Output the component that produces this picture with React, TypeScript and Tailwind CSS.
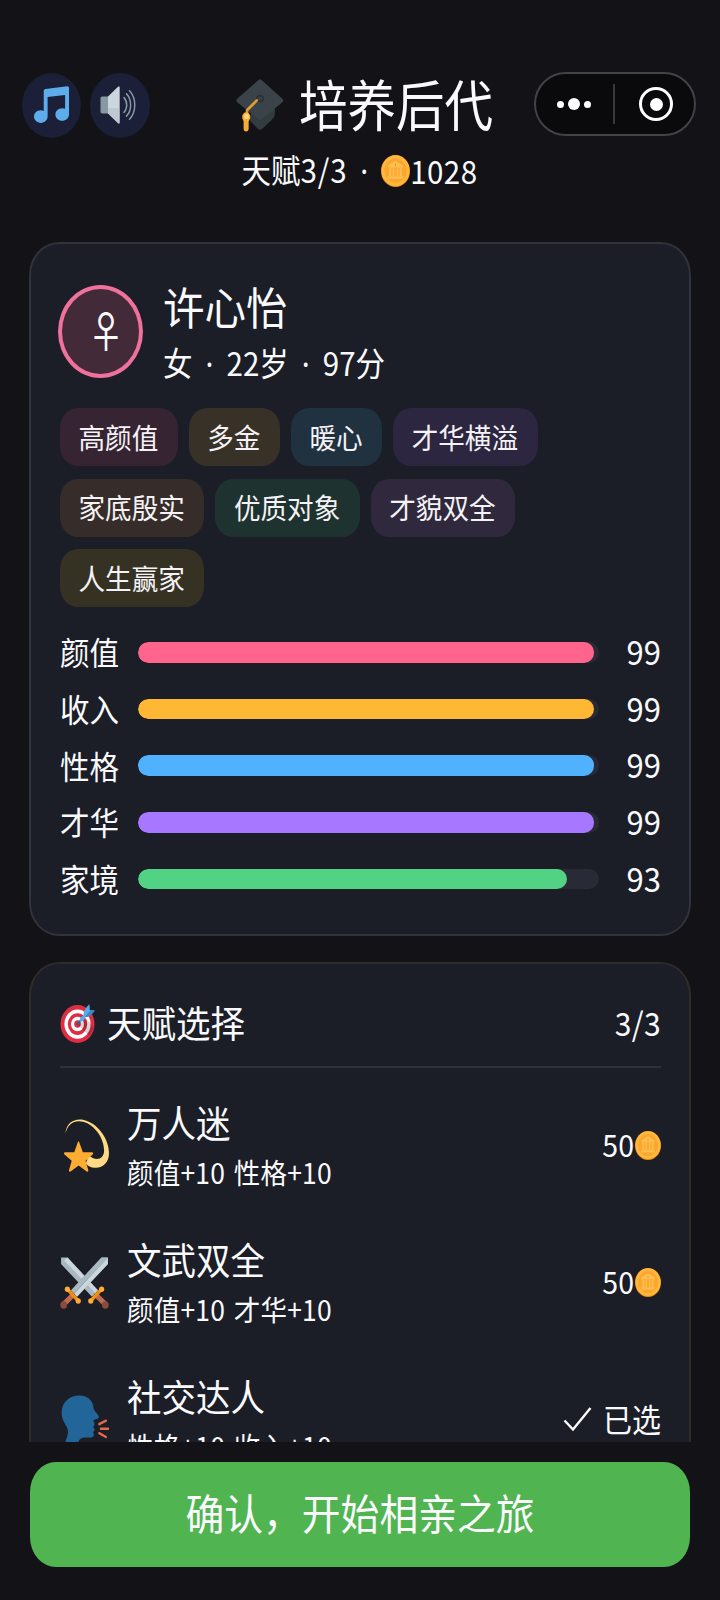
import React from "react";

interface Tag {
  label: string;
  className: string;
}

interface Stat {
  label: string;
  value: number;
  color: string;
}

interface Talent {
  name: string;
  effect: string;
  icon: React.ReactNode;
  price: number;
  selected?: boolean;
}

interface IconProps {
  className?: string;
}

const NoteIcon: React.FC<IconProps> = ({ className = "" }) => (
  <svg viewBox="0 0 36 36" preserveAspectRatio="none" className={className}>
    <path
      fill="#5DADEC"
      d="M34.209.206L11.791 2.793C10.806 2.907 10 3.811 10 4.803v18.782C9.09 23.214 8.075 23 7 23c-3.865 0-7 2.685-7 6 0 3.314 3.135 6 7 6s7-2.686 7-6V10.539l18-2.077v13.124c-.91-.372-1.925-.586-3-.586-3.865 0-7 2.685-7 6 0 3.314 3.135 6 7 6s7-2.686 7-6V1.803c0-.992-.806-1.71-1.791-1.597z"
    />
  </svg>
);

const SpeakerIcon: React.FC<IconProps> = ({ className = "" }) => (
  <svg viewBox="0 0 36 36" preserveAspectRatio="none" className={className}>
    <path fill="#8899A6" d="M9 10H2c-1 0-1.500.7-1.500 1.500v13c0 .8.500 1.500 1.500 1.500h7z" />
    <path fill="#CCD6DD" d="M8 10L18 .8c.9-.7 1.700-.3 1.700.8v32.800c0 1.100-.8 1.500-1.700.8L8 26z" />
    <path fill="#AAB8C2" d="M8 21h11.700v13.400c0 1.100-.8 1.500-1.700.8L8 26z" opacity=".45" />
    <g fill="none" stroke="#8899A6" strokeLinecap="round" strokeWidth="1.500">
      <path d="M24 11c3.600 3.600 3.600 10.400 0 14" />
      <path d="M26.500 7.500c5.500 5.300 5.500 15.700 0 21" />
      <path d="M29.500 4.500c7 6.900 7 20.100 0 27" />
    </g>
  </svg>
);

const CapIcon: React.FC<IconProps> = ({ className = "" }) => (
  <svg viewBox="0 0 36 36" preserveAspectRatio="none" className={className}>
    <path
      fill="#323B40"
      d="M28.600 18.500c1.300 3 .9 7.600-2 9.700l-6.800 5.600c-1 .9-2.500.9-3.500 0l-5.800-5.300 1-8z"
    />
    <path
      fill="#394349"
      d="M16.900 1.400c.7-.7 1.600-.7 2.300 0l15.600 12.400c.8.700.8 1.600 0 2.300L19.200 27.700c-.7.600-1.600.6-2.300 0L.9 16.100c-.8-.7-.8-1.600 0-2.300z"
    />
    <ellipse cx="18" cy="13.800" rx="2.400" ry="1.900" fill="none" stroke="#292F33" strokeWidth="1" />
    <path d="M15.500 15l-7.200 6.400v4" fill="none" stroke="#E39A32" strokeWidth="2" strokeLinecap="round" />
    <path d="M7.600 28.500v5.200" fill="none" stroke="#F4AB37" strokeWidth="3.800" strokeLinecap="round" />
    <circle cx="7.700" cy="26" r="3.100" fill="#FFAC33" />
    <circle cx="7.900" cy="25.600" r="1.800" fill="#FFD983" />
  </svg>
);

const CoinIcon: React.FC<IconProps> = ({ className = "" }) => (
  <svg viewBox="0 0 36 36" preserveAspectRatio="none" className={className}>
    <circle cx="18" cy="18" r="18" fill="#F4900C" />
    <circle cx="18" cy="17.600" r="17.300" fill="#FFB83F" />
    <circle cx="18" cy="17.600" r="13.800" fill="#FBA62D" />
    <g fill="#FFBF50">
      <path d="M18 6.500l9.200 5v2.700H8.800v-2.700z" />
      <path d="M10.200 15h2.600v8.500h-2.600zM14.600 15h2v8.500h-2zM19.400 15h2v8.500h-2zM23.200 15h2.600v8.500h-2.600z" />
      <path d="M8.800 24h18.400v2.800H8.800z" />
    </g>
    <path d="M17.300 10.200h1.400v2.400h-1.400z" fill="#F4900C" />
  </svg>
);

const TargetIcon: React.FC<IconProps> = ({ className = "" }) => (
  <svg viewBox="0 0 36 36" preserveAspectRatio="none" className={className}>
    <circle cx="18" cy="18.500" r="17.500" fill="#DD2E44" />
    <circle cx="18" cy="18.500" r="13.500" fill="#FFF" />
    <circle cx="18" cy="18.500" r="10" fill="#DD2E44" />
    <circle cx="18" cy="18.500" r="6.700" fill="#FFF" />
    <circle cx="18" cy="18.500" r="3.400" fill="#DD2E44" />
    <path fill="#000" opacity=".16" d="M18.200 19l12 10.500 4.500-7.500-7-8z" />
    <path d="M18 18.500L28.500 8" stroke="#226699" strokeWidth="2" strokeLinecap="round" />
    <path fill="#55ACEE" d="M24.500 11.500c-1.300-3 1-7 5.500-11.200.7 2 .6 3.600.4 5.300 1.800-.3 3.400-.2 5.300.7-3.700 4.500-8 6.800-11.200 5.200z" />
    <path fill="#3A87C2" d="M25.500 12l6.300-6.800 3.900 1c-3.200 4.200-7 6.400-10.200 5.800z" />
    <path fill="#55ACEE" d="M20 15.500c.2-2.600 2-4.300 4.700-5l1.400 1.500c-.8 2.700-2.800 4.300-5.400 4.500z" />
  </svg>
);

const DizzyIcon: React.FC<IconProps> = ({ className = "" }) => (
  <svg viewBox="0 0 36 36" preserveAspectRatio="none" className={className}>
    <path
      fill="#FFD983"
      d="M4 11.300C4.500 4 10.500.7 17.500 2 27.500 4 36 14.500 36 24.500c0 6.500-4.500 10.300-10.300 10-3-.1-5.300-1.300-6.700-3l2-5.500c5.500 4.500 11.500 2.500 11.400-3.500-.2-8.300-6.900-17.200-15.400-19.300C10.500 1.700 5.500 4.800 4 11.300z"
    />
    <path
      fill="#FFAC33"
      d="M14 16.800l2.800 7.200h6.700c.9 0 1.200 1 .5 1.500l-5.200 4.200 2 6.500c.2.800-.6 1.300-1.200.8L13.700 33l-5.900 4c-.6.500-1.400 0-1.200-.8l2-6.500-5.300-4.200c-.7-.5-.4-1.500.5-1.500h6.700l2.700-7.200c.2-.5.700-.5.800 0z"
    />
  </svg>
);

const SwordsIcon: React.FC<IconProps> = ({ className = "" }) => (
  <svg viewBox="0 0 36 36" preserveAspectRatio="none" className={className}>
    <g>
      <path fill="#AAB8C2" d="M.8 1h4.700l22.300 22.300-4.300 4.300L.8 5.500z" />
      <path fill="#CCD6DD" d="M5.500 1l22.300 22.300-1.900 1.900L3 3z" />
      <path d="M27 27l6.300 5.800" stroke="#BF6952" strokeWidth="3.600" />
      <circle cx="33.300" cy="33.300" r="2.500" fill="#8A4B38" />
      <path d="M22.500 30.500l8.300-8.300" stroke="#F4900C" strokeWidth="2.400" />
      <circle cx="22.600" cy="30.600" r="1.900" fill="#FFAC33" />
      <circle cx="30.600" cy="22.600" r="1.900" fill="#FFAC33" />
    </g>
    <g transform="matrix(-1 0 0 1 36 0)">
      <path fill="#8899A6" d="M.8 1h4.700l22.300 22.300-4.300 4.300L.8 5.500z" />
      <path fill="#CCD6DD" d="M.8 1v4.500l22.700 22.100 2-2L2.800 3z" />
      <path fill="#AAB8C2" d="M2.800 3L.8 1h4.700l22.300 22.300-2 2z" />
      <path d="M27 27l6.300 5.800" stroke="#BF6952" strokeWidth="3.600" />
      <circle cx="33.300" cy="33.300" r="2.500" fill="#8A4B38" />
      <path d="M22.500 30.500l8.300-8.300" stroke="#F4900C" strokeWidth="2.400" />
      <circle cx="22.600" cy="30.600" r="1.900" fill="#FFAC33" />
      <circle cx="30.600" cy="22.600" r="1.900" fill="#FFAC33" />
    </g>
  </svg>
);

const SpeakingHeadIcon: React.FC<IconProps> = ({ className = "" }) => (
  <svg viewBox="0 0 36 36" preserveAspectRatio="none" className={className}>
    <path
      fill="#269"
      d="M24.600 9.500C24.300 4.200 20 1 14.200 1 6.500 1 1.200 6 1.200 12.500c0 4.500 1.800 6.500 3.600 9.500 1.400 2.400 1.300 5 .3 7.500-.8 2-1.500 3-.5 4V36h8.600c0-3.600.6-5.600 3.800-6.300 3-.6 6.700.7 7.700-1.300.5-1-.5-1.800-.3-2.400.3-.7 1.200-.8 1.100-1.800 0-.8-1.100-1-1-1.700.1-.8 1-.9.9-2.300-.1-1-1.200-1.300-.8-2.200.5-1 3.700-.8 4-2.200.3-1.200-3.900-4.600-4-6.300z"
    />
    <g stroke="#E36B4B" strokeWidth="1.600" strokeLinecap="round">
      <path d="M28.800 20.500l5-2.400" />
      <path d="M30 23.600h5.400" />
      <path d="M28.800 26.600l5 2.600" />
    </g>
  </svg>
);

const CheckIcon: React.FC<IconProps> = ({ className = "" }) => (
  <svg viewBox="0 0 29 26" className={className}>
    <path d="M1.500 14.500l8.500 9L27.500 2" fill="none" stroke="currentColor" strokeWidth="2.400" />
  </svg>
);

const tags: Tag[] = [
  { label: "高颜值", className: "bg-[#372432]" },
  { label: "多金", className: "bg-[#383128]" },
  { label: "暖心", className: "bg-[#203140]" },
  { label: "才华横溢", className: "bg-[#2c2640]" },
  { label: "家底殷实", className: "bg-[#362d2a]" },
  { label: "优质对象", className: "bg-[#1e332f]" },
  { label: "才貌双全", className: "bg-[#30293d]" },
  { label: "人生赢家", className: "bg-[#353224]" },
];

const stats: Stat[] = [
  { label: "颜值", value: 99, color: "bg-[#ff658c]" },
  { label: "收入", value: 99, color: "bg-[#ffb833]" },
  { label: "性格", value: 99, color: "bg-[#50b2ff]" },
  { label: "才华", value: 99, color: "bg-[#a877ff]" },
  { label: "家境", value: 93, color: "bg-[#52d383]" },
];

const talents: Talent[] = [
  {
    name: "万人迷",
    effect: "颜值+10 性格+10",
    icon: <DizzyIcon className="-mt-[5px] h-[53px] w-[49px] overflow-visible" />,
    price: 50,
  },
  {
    name: "文武双全",
    effect: "颜值+10 才华+10",
    icon: <SwordsIcon className="h-[53px] w-[49px]" />,
    price: 50,
  },
  {
    name: "社交达人",
    effect: "性格+10 收入+10",
    icon: <SpeakingHeadIcon className="mt-[1px] h-[53px] w-[49px]" />,
    price: 50,
    selected: true,
  },
];

// Thin separator between the values of a line
const Dot: React.FC<{ className?: string }> = ({ className = "" }) => (
  <span className={`inline-block text-center font-['Noto_Sans',sans-serif] ${className}`}>·</span>
);

// System capsule in the top right corner
const Capsule: React.FC = () => (
  <div className="flex h-16 w-[162px] items-center rounded-full border-2 border-[#434345] bg-[#0a0a0c]">
    <div className="flex w-[77px] items-center justify-center gap-[4px] pr-[2px]">
      <span className="size-[7px] rounded-full bg-white" />
      <span className="size-[12px] rounded-full bg-white" />
      <span className="size-[7px] rounded-full bg-white" />
    </div>
    <span className="h-10 w-[2px] bg-[#38383a]" />
    <div className="ml-[24px] flex size-[34px] items-center justify-center rounded-full border-[3.5px] border-white">
      <span className="size-[13px] rounded-full bg-white" />
    </div>
  </div>
);

const Header: React.FC = () => (
  <header className="h-[242px] pt-[72px]">
    <div className="flex h-[66px] items-center pl-[22px]">
      <div className="flex h-[65px] w-[59px] items-center justify-center rounded-[50%] bg-[#1b1f38]">
        <NoteIcon className="h-[38px] w-[35px]" />
      </div>
      <div className="ml-[9px] flex h-[65px] w-[60px] items-center rounded-[50%] bg-[#1b1f38] pl-[10px]">
        <SpeakerIcon className="h-[38px] w-[36px]" />
      </div>
      <CapIcon className="ml-[86px] h-[54px] w-[48px]" />
      <h1 className="-mt-[6px] ml-[15px] w-[235px] scale-y-112 text-[48.5px] leading-[60px] whitespace-nowrap">
        培养后代
      </h1>
      <div className="-mt-[2px]">
        <Capsule />
      </div>
    </div>
    <div className="mt-[14px] flex h-10 items-center justify-center pr-[1px] text-[29.500px] leading-10">
      <span className="-mt-[5px] scale-y-110">
        天赋<span className="tracking-[.8px]">3/3</span>
        <Dot className="w-[34px]" />
      </span>
      <CoinIcon className="-mt-[2px] h-[32px] w-[29px]" />
      <span className="-mt-[5px] scale-y-110 tracking-[.4px]">1028</span>
    </div>
  </header>
);

const ProfileCard: React.FC = () => (
  <section className="h-[694px] rounded-[30px/33px] border-2 border-[#30323c] bg-[#1b1e27] px-[28px] pt-[41px]">
    <div className="flex h-[93px]">
      <div className="-ml-[1px] flex h-[93px] w-[85px] items-center justify-center rounded-[50%] border-4 border-[#ef719c] bg-[#432a38] pl-[11px]">
        <span className="-mt-[5px] scale-y-120 text-[36px] leading-[50px]">♀</span>
      </div>
      <div className="ml-[20px]">
        <h2 className="-mt-[4px] scale-y-108 text-[41.500px] leading-[50px]">许心怡</h2>
        <p className="mt-[11px] scale-y-110 text-[29.500px] leading-[40px]">
          女
          <Dot className="w-[34px]" />
          22岁
          <Dot className="w-[34px]" />
          97分
        </p>
      </div>
    </div>

    <div className="mt-[30px] flex w-[520px] flex-wrap gap-x-[11px] gap-y-[12.500px] pl-[1px]">
      {tags.map((tag) => (
        <span
          key={tag.label}
          className={`flex h-[58px] items-center rounded-[18px/20px] px-[19px] text-[26.600px] text-[#f4f2f5] ${tag.className}`}
        >
          <span className="-mt-[1px] -ml-[.5px] scale-y-108 pr-[.5px] leading-[36px]">{tag.label}</span>
        </span>
      ))}
    </div>

    <div className="mt-[17px] pl-[1px]">
      {stats.map((stat) => (
        <div key={stat.label} className="flex h-[56.700px] items-center">
          <span className="-mt-[2px] w-[78px] shrink-0 scale-y-108 text-[29.500px] leading-[40px]">
            {stat.label}
          </span>
          <div className="h-[20.500px] w-[461px] shrink-0 overflow-hidden rounded-[10px] bg-[#282a36]">
            <div
              className={`h-full rounded-[10px] ${stat.color}`}
              style={{ width: `${stat.value}%` }}
            />
          </div>
          <span className="-mt-[3px] flex-1 scale-y-108 text-right text-[31px] leading-[40px]">{stat.value}</span>
        </div>
      ))}
    </div>
  </section>
);

const TalentRow: React.FC<Talent> = ({ name, effect, icon, price, selected = false }) => (
  <div className="flex h-[137px] items-center">
    {icon}
    <div className="ml-[18px] flex-1">
      <h3 className="mt-[1px] scale-y-108 text-[34.500px] leading-[50px]">{name}</h3>
      <p className="scale-y-108 text-[26.500px] leading-[49px] tracking-[.2px] [word-spacing:2.5px]">
        {effect}
      </p>
    </div>
    {selected ? (
      <div className="-mt-[2px] flex items-center">
        <CheckIcon className="mt-[1px] mr-[11px] h-[26px] w-[29px]" />
        <span className="-mt-[2px] scale-y-108 text-[29px] leading-[40px]">已选</span>
      </div>
    ) : (
      <div className="flex items-center">
        <span className="-mt-[3px] scale-y-108 text-[28.500px] leading-[40px]">{price}</span>
        <CoinIcon className="ml-[1px] h-[29px] w-[26px]" />
      </div>
    )}
  </div>
);

const TalentCard: React.FC = () => (
  <section className="mt-[26px] h-[700px] rounded-[30px/33px] border-2 border-[#2f2b27] bg-[#1b1e27] px-[28px] pt-[28px]">
    <div className="ml-[1px] flex h-[76px] items-center border-b-2 border-[#2f323b]">
      <TargetIcon className="-mt-[12px] h-[39px] w-[35px]" />
      <h2 className="-mt-[15px] ml-[12px] flex-1 scale-y-108 text-[34.500px] leading-[50px]">天赋选择</h2>
      <span className="-mt-[14px] scale-y-108 text-[30px] leading-[40px] tracking-[.4px]">3/3</span>
    </div>
    <div className="pt-[9px] pl-[1px]">
      {talents.map((talent) => (
        <TalentRow key={talent.name} {...talent} />
      ))}
    </div>
  </section>
);

const App: React.FC = () => {
  return (
    <div className="flex h-[1600px] w-[720px] flex-col overflow-hidden bg-[#121217] font-['Noto_Sans_CJK_SC',sans-serif] text-[#fafafc]">
      <main className="h-[1442px] shrink-0 overflow-hidden">
        <Header />
        <div className="px-[29px]">
          <ProfileCard />
          <TalentCard />
        </div>
      </main>
      <footer className="px-[30px] pt-[20px]">
        <button className="flex h-[105px] w-full items-center justify-center rounded-[26px/30px] bg-[#50b450] text-[38.800px]">
          <span className="-mt-[6px] scale-y-108 leading-[50px]">确认，开始相亲之旅</span>
        </button>
      </footer>
    </div>
  );
};

export default App;
